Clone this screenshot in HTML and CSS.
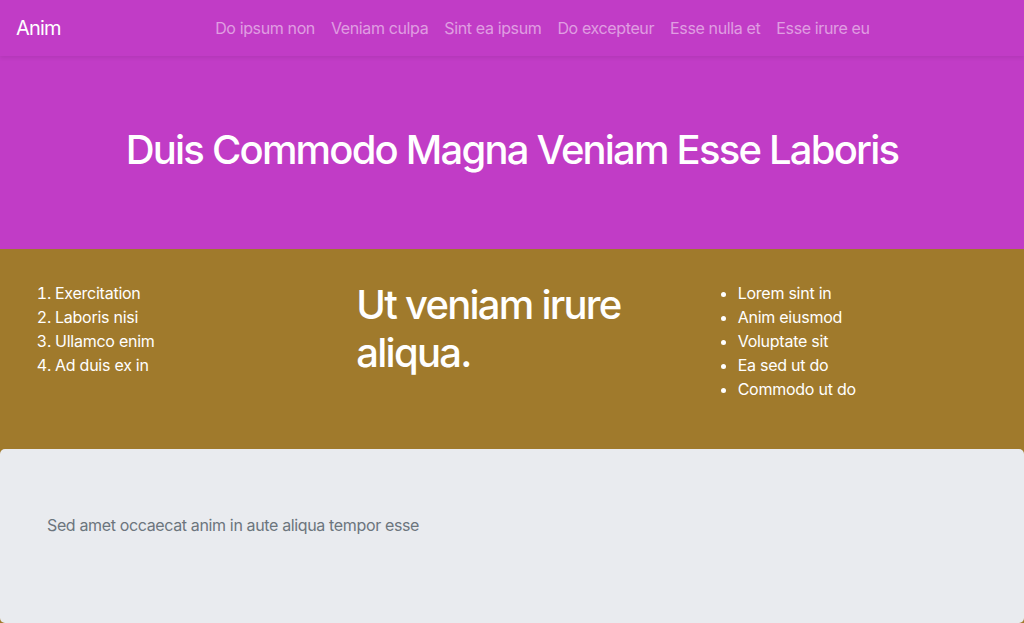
FILE: index.html
```html
<!DOCTYPE html>
<html lang="en">
<head>
<meta charset="utf-8">
<title>Anim</title>
<link rel="stylesheet" href="styles.css">
</head>
<body>
<nav class="navbar">
  <a class="brand" href="#">Anim</a>
  <div class="nav-collapse">
    <ul class="nav">
      <li><a class="nav-link" href="#">Do ipsum non</a></li>
      <li><a class="nav-link" href="#">Veniam culpa</a></li>
      <li><a class="nav-link" href="#">Sint ea ipsum</a></li>
      <li><a class="nav-link" href="#">Do excepteur</a></li>
      <li><a class="nav-link" href="#">Esse nulla et</a></li>
      <li><a class="nav-link" href="#">Esse irure eu</a></li>
    </ul>
  </div>
</nav>
<header class="hero">
  <h1 class="hero-title">Duis Commodo Magna Veniam Esse Laboris</h1>
</header>
<section class="band">
  <div class="row">
    <div class="col">
      <ol class="list">
        <li>Exercitation</li>
        <li>Laboris nisi</li>
        <li>Ullamco enim</li>
        <li>Ad duis ex in</li>
      </ol>
    </div>
    <div class="col">
      <h2 class="band-title">Ut veniam irure aliqua.</h2>
    </div>
    <div class="col">
      <ul class="list">
        <li>Lorem sint in</li>
        <li>Anim eiusmod</li>
        <li>Voluptate sit</li>
        <li>Ea sed ut do</li>
        <li>Commodo ut do</li>
      </ul>
    </div>
  </div>
</section>
<section class="jumbotron">
  <div class="jumbo-inner">
    <p class="muted">Sed amet occaecat anim in aute aliqua tempor esse</p>
  </div>
</section>
</body>
</html>
```
FILE: styles.css
```css
* { box-sizing: border-box; }
html, body { margin: 0; padding: 0; }
body {
  font-family: Inter, "Noto Sans", "Liberation Sans", sans-serif;
  font-size: 16px;
  line-height: 1.5;
  color: #212529;
  background: #a07a2c;
}
.navbar {
  position: relative;
  z-index: 2;
  display: flex;
  align-items: center;
  padding: 8px 16px;
  height: 56px;
  background: #c13cc6;
  box-shadow: 0 2px 4px rgba(0,0,0,.075);
}
.brand {
  color: #fff;
  font-size: 20px;
  line-height: 30px;
  padding: 5px 0;
  margin-right: 16px;
  text-decoration: none;
  letter-spacing: -0.8px;
}
.nav-collapse {
  flex: 1;
  display: flex;
  justify-content: center;
}
.nav {
  display: flex;
  list-style: none;
  margin: 0;
  padding: 0;
}
.nav-link {
  display: block;
  padding: 8px 8px;
  color: rgba(255,255,255,.5);
  text-decoration: none;
  letter-spacing: -0.37px;
}
.hero {
  background: #c13cc6;
  padding: 70px 16px 67px;
  text-align: center;
}
.hero-title {
  margin: 0 0 8px;
  font-size: 40px;
  line-height: 1.2;
  font-weight: 500;
  color: #fff;
  letter-spacing: -1.8px;
}
.band {
  background: #a07a2c;
  padding: 32px 15px;
  color: #fff;
}
.row {
  display: grid;
  grid-template-columns: repeat(3, 1fr);
  margin: 0 -15px;
}
.col {
  padding: 0 15px;
}
.list {
  margin: 0 0 16px;
  padding-left: 40px;
  letter-spacing: -0.25px;
}
.band-title {
  margin: 0 0 8px;
  font-size: 40px;
  line-height: 1.2;
  font-weight: 500;
  letter-spacing: -1.75px;
}
.jumbotron {
  background: #e9ebef;
  border-radius: 5px;
  padding: 64px 32px 70px;
  margin-bottom: 32px;
}
.jumbo-inner {
  padding: 0 15px;
}
.muted {
  margin: 0 0 16px;
  color: #6c757d;
  letter-spacing: -0.36px;
}
```
